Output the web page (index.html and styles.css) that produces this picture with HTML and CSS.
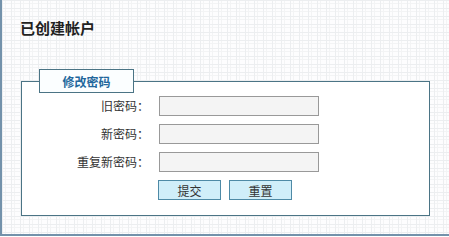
FILE: index.html
```html
<!DOCTYPE html>
<html lang="zh-CN">

<head>
    <meta charset="UTF-8">
    <title>已创建帐户</title>
    <link rel="stylesheet" href="styles.css">
</head>

<body>
    <div class="page">
        <h1 class="title">已创建帐户</h1>
        <form class="pwd-form" onsubmit="return false;">
            <fieldset>
                <legend>修改密码</legend>
                <div class="form-grid">
                    <label for="oldPwd">旧密码：</label>
                    <input type="password" id="oldPwd" name="oldPwd">
                    <label for="newPwd">新密码：</label>
                    <input type="password" id="newPwd" name="newPwd">
                    <label for="newPwd2">重复新密码：</label>
                    <input type="password" id="newPwd2" name="newPwd2">
                    <span></span>
                    <div class="buttons">
                        <button type="submit">提交</button>
                        <button type="reset">重置</button>
                    </div>
                </div>
            </fieldset>
        </form>
    </div>
</body>

</html>
```

FILE: styles.css
```css
body {
    margin: 0;
    font-family: "Noto Sans CJK SC", "Liberation Sans", sans-serif;
    font-size: 12px;
    color: #333;
    background: #fff;
}

.page {
    height: 236px;
    box-sizing: border-box;
    padding: 17px 0 0 19px;
    border-left: 2px solid #7392ab;
    border-bottom: 2px solid #7392ab;
    background-color: #fdfdfe;
    background-image:
        linear-gradient(#eceef0 1px, transparent 1px),
        linear-gradient(90deg, #eceef0 1px, transparent 1px),
        linear-gradient(#f3f4f5 1px, transparent 1px),
        linear-gradient(90deg, #f3f4f5 1px, transparent 1px);
    background-size: 9px 8px, 9px 8px, 9px 8px, 9px 8px;
    background-position: 0 0, 0 0, 3px 3px, 3px 3px;
}

.title {
    margin: 0 0 0 -1px;
    font-size: 15px;
    line-height: 22px;
    font-weight: bold;
    color: #222;
}

.pwd-form {
    margin-top: 30px;
}

fieldset {
    width: 409px;
    box-sizing: border-box;
    margin: 0;
    padding: 0 0 15px 0;
    border: 1px solid #4b7485;
    background: #fff;
}

legend {
    display: flex;
    justify-content: center;
    align-items: center;
    margin-left: 17px;
    width: 95px;
    height: 24px;
    box-sizing: border-box;
    padding: 0;
    border: 1px solid #4b7485;
    background: #fbfeff;
    font-weight: bold;
    color: #22679c;
}

.form-grid {
    display: grid;
    grid-template-columns: 127px 160px;
    column-gap: 10px;
    row-gap: 8px;
    margin-top: 3px;
    align-items: center;
}

.form-grid label {
    text-align: right;
    line-height: 20px;
}

input[type="password"] {
    width: 160px;
    height: 20px;
    box-sizing: border-box;
    margin: 0;
    border: 1px solid #999;
    background: #f4f4f4;
}

.buttons {
    display: flex;
    gap: 8px;
    margin-left: -1px;
}

button {
    width: 63px;
    height: 20px;
    padding: 0;
    font-family: inherit;
    font-size: 12px;
    color: #333;
    background: #d0eef9;
    border: 1px solid #4e8aa6;
    cursor: pointer;
}
```
